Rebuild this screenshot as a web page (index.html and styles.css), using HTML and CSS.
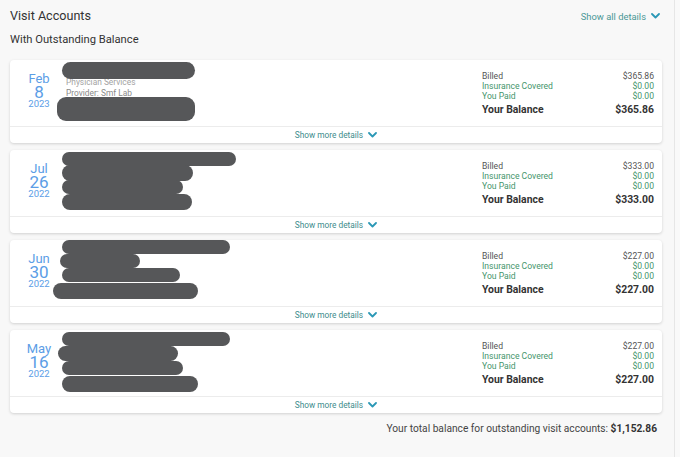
FILE: index.html
```html
<!DOCTYPE html>
<html lang="en">
<head>
<meta charset="utf-8">
<title>Visit Accounts</title>
<link rel="stylesheet" href="styles.css">
</head>
<body>
<div class="page">
  <header class="head">
    <h1 class="title">Visit Accounts</h1>
    <a class="show-all">Show all details
      <svg class="chev" width="9" height="6" viewBox="0 0 9 6"><path d="M1 1 L4.5 4.5 L8 1" fill="none" stroke="currentColor" stroke-width="1.8" stroke-linecap="round" stroke-linejoin="round"/></svg>
    </a>
  </header>
  <h2 class="subtitle">With Outstanding Balance</h2>

  <div class="cards">
    <section class="card c1">
      <div class="card-main">
        <div class="date"><span class="mon">Feb</span><span class="day">8</span><span class="yr">2023</span></div>
        <div class="details">
          <div class="bar"></div>
          <div class="line l1">Physician Services</div>
          <div class="line l2">Provider: Smf Lab</div>
          <div class="bar"></div>
        </div>
        <div class="summary">
          <span class="lab">Billed</span><span class="val">$365.86</span>
          <span class="lab g">Insurance Covered</span><span class="val g">$0.00</span>
          <span class="lab g">You Paid</span><span class="val g">$0.00</span>
          <span class="lab b">Your Balance</span><span class="val b">$365.86</span>
        </div>
      </div>
      <div class="card-foot"><a class="more">Show more details <svg class="chev" width="9" height="6" viewBox="0 0 9 6"><path d="M1 1 L4.5 4.5 L8 1" fill="none" stroke="currentColor" stroke-width="1.8" stroke-linecap="round" stroke-linejoin="round"/></svg></a></div>
    </section>

    <section class="card c2">
      <div class="card-main">
        <div class="date"><span class="mon">Jul</span><span class="day">26</span><span class="yr">2022</span></div>
        <div class="details">
          <div class="bar"></div><div class="bar"></div><div class="bar"></div><div class="bar"></div>
        </div>
        <div class="summary">
          <span class="lab">Billed</span><span class="val">$333.00</span>
          <span class="lab g">Insurance Covered</span><span class="val g">$0.00</span>
          <span class="lab g">You Paid</span><span class="val g">$0.00</span>
          <span class="lab b">Your Balance</span><span class="val b">$333.00</span>
        </div>
      </div>
      <div class="card-foot"><a class="more">Show more details <svg class="chev" width="9" height="6" viewBox="0 0 9 6"><path d="M1 1 L4.5 4.5 L8 1" fill="none" stroke="currentColor" stroke-width="1.8" stroke-linecap="round" stroke-linejoin="round"/></svg></a></div>
    </section>

    <section class="card c3">
      <div class="card-main">
        <div class="date"><span class="mon">Jun</span><span class="day">30</span><span class="yr">2022</span></div>
        <div class="details">
          <div class="bar"></div><div class="bar"></div><div class="bar"></div><div class="bar"></div>
        </div>
        <div class="summary">
          <span class="lab">Billed</span><span class="val">$227.00</span>
          <span class="lab g">Insurance Covered</span><span class="val g">$0.00</span>
          <span class="lab g">You Paid</span><span class="val g">$0.00</span>
          <span class="lab b">Your Balance</span><span class="val b">$227.00</span>
        </div>
      </div>
      <div class="card-foot"><a class="more">Show more details <svg class="chev" width="9" height="6" viewBox="0 0 9 6"><path d="M1 1 L4.5 4.5 L8 1" fill="none" stroke="currentColor" stroke-width="1.8" stroke-linecap="round" stroke-linejoin="round"/></svg></a></div>
    </section>

    <section class="card c4">
      <div class="card-main">
        <div class="date"><span class="mon">May</span><span class="day">16</span><span class="yr">2022</span></div>
        <div class="details">
          <div class="bar"></div><div class="bar"></div><div class="bar"></div><div class="bar"></div>
        </div>
        <div class="summary">
          <span class="lab">Billed</span><span class="val">$227.00</span>
          <span class="lab g">Insurance Covered</span><span class="val g">$0.00</span>
          <span class="lab g">You Paid</span><span class="val g">$0.00</span>
          <span class="lab b">Your Balance</span><span class="val b">$227.00</span>
        </div>
      </div>
      <div class="card-foot"><a class="more">Show more details <svg class="chev" width="9" height="6" viewBox="0 0 9 6"><path d="M1 1 L4.5 4.5 L8 1" fill="none" stroke="currentColor" stroke-width="1.8" stroke-linecap="round" stroke-linejoin="round"/></svg></a></div>
    </section>
  </div>

  <p class="total">Your total balance for outstanding visit accounts: <strong>$1,152.86</strong></p>
</div>
</body>
</html>
```

FILE: styles.css
```css
* { box-sizing: border-box; }
html, body { margin: 0; padding: 0; }
body {
  background: #f9f9f9;
  font-family: Roboto, "Liberation Sans", sans-serif;
  color: #333;
}
.page {
  width: 675px;
  min-height: 457px;
  padding: 0 12px 0 10px;
  border-right: 1px solid #e6e6e6;
  background: #f8f8f8;
}
.head {
  display: flex;
  justify-content: space-between;
  align-items: center;
  padding-top: 7px;
  height: 25px;
}
.title {
  margin: 0;
  font-size: 12.6px;
  font-weight: 400;
  line-height: 18px;
  color: #333;
}
.show-all {
  display: flex;
  align-items: center;
  gap: 5px;
  margin-right: 2px;
  font-size: 9.4px;
  color: #4a9796;
}
.show-all .chev { color: #2b98b6; }
.subtitle {
  margin: 7px 0 0;
  font-size: 11.2px;
  font-weight: 400;
  line-height: 16px;
  color: #333;
}
.cards {
  margin-top: 12px;
  display: flex;
  flex-direction: column;
  gap: 7px;
}
.card {
  background: #fff;
  border-radius: 4px;
  box-shadow: 0 1px 3px rgba(0,0,0,0.16);
}
.card-main {
  height: 66px;
  display: flex;
  align-items: stretch;
}
.date {
  flex: none;
  width: 52px;
  padding: 12px 0 0 6px;
  display: flex;
  flex-direction: column;
  align-items: center;
  justify-content: flex-start;
  color: #5b9de6;
}
.mon { font-size: 13px; line-height: 14px; }
.day { font-size: 17px; line-height: 13px; }
.yr { font-size: 9.5px; line-height: 10px; }
.details {
  flex: 1;
  display: flex;
  flex-direction: column;
  align-items: flex-start;
}
.bar {
  position: relative;
  z-index: 1;
  background: #565759;
  border-radius: 9px;
}
.line {
  font-size: 8.4px;
  line-height: 11px;
  padding-left: 4px;
}
.l1 { color: #a3a3a3; margin-top: -2px; }
.l2 { color: #8a8a8a; }

.c1 .details { padding-top: 2px; }
.c1 .bar:nth-child(1) { width: 133px; height: 17px; }
.c1 .bar:nth-child(4) { width: 138px; height: 24px; margin-left: -5px; margin-top: -2px; }

.c2 .details { padding-top: 2px; }
.c2 .bar:nth-child(1) { width: 174px; height: 14px; }
.c2 .bar:nth-child(2) { width: 131px; height: 16px; margin-top: -1px; }
.c2 .bar:nth-child(3) { width: 121px; height: 14px; margin-top: -1px; }
.c2 .bar:nth-child(4) { width: 130px; height: 16px; }

.c3 .details { padding-top: 0; }
.c3 .bar:nth-child(1) { width: 168px; height: 14px; }
.c3 .bar:nth-child(2) { width: 80px; height: 14px; margin-left: -2px; }
.c3 .bar:nth-child(3) { width: 118px; height: 14px; }
.c3 .bar:nth-child(4) { width: 145px; height: 16px; margin-left: -9px; margin-top: 1px; }

.c4 .details { padding-top: 2px; }
.c4 .bar:nth-child(1) { width: 168px; height: 14px; }
.c4 .bar:nth-child(2) { width: 120px; height: 15px; margin-left: -4px; }
.c4 .bar:nth-child(3) { width: 121px; height: 14px; }
.c4 .bar:nth-child(4) { width: 136px; height: 16px; margin-top: 1px; }

.summary {
  flex: none;
  width: 172px;
  margin-right: 8px;
  align-self: center;
  display: grid;
  grid-template-columns: 1fr auto;
  font-size: 8.6px;
  line-height: 10px;
  color: #555;
}
.summary .val { text-align: right; }
.summary .g { color: #44956c; }
.summary .b {
  font-size: 10.4px;
  font-weight: 700;
  line-height: 12px;
  color: #333;
  margin-top: 3px;
}
.card-foot {
  height: 17px;
  border-top: 1px solid #ececec;
  display: flex;
  align-items: center;
  justify-content: center;
}
.more {
  display: flex;
  align-items: center;
  gap: 5px;
  font-size: 8.3px;
  color: #3d8c8c;
}
.more .chev { color: #2b98b6; }
.total {
  margin: 9px 5px 0 0;
  text-align: right;
  font-size: 10.2px;
  line-height: 14px;
  color: #444;
}
.total strong { color: #333; }
```
